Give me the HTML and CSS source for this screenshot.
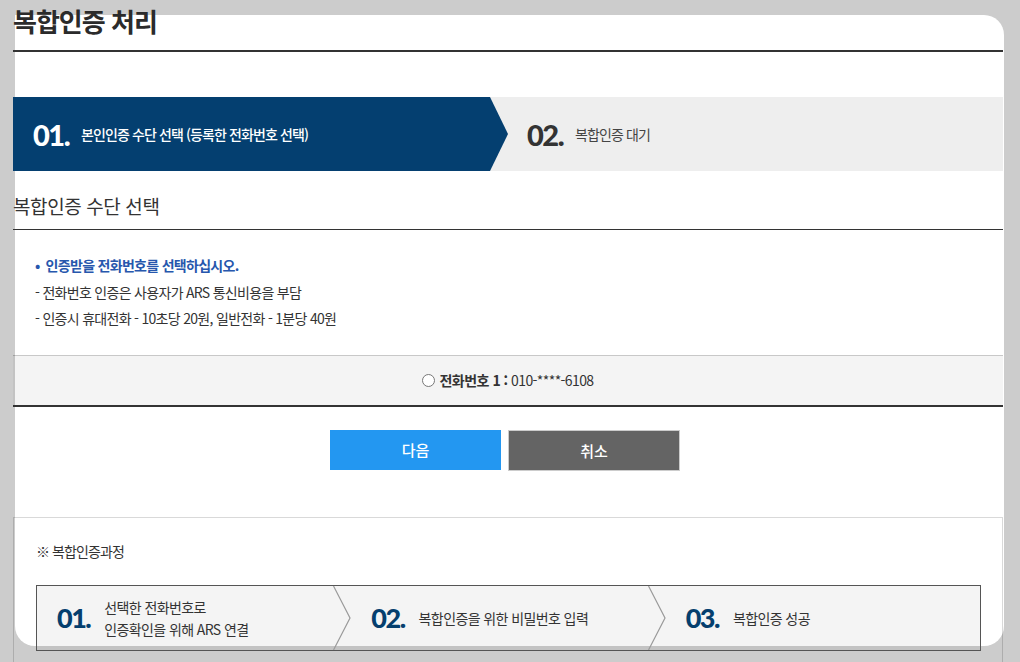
FILE: index.html
```html
<!DOCTYPE html>
<html lang="ko">
<head>
    <meta charset="UTF-8">
    <meta name="viewport" content="width=device-width, initial-scale=1.0">
    <title>복합인증 처리</title>
    <link rel="stylesheet" href="styles.css">
</head>
<body>
    <div class="panel">
        <div class="content">
            <h1 class="page-title">복합인증 처리</h1>

            <ol class="steps">
                <li class="step step-on"><span class="num">01.</span><span class="step-txt">본인인증 수단 선택 (등록한 전화번호 선택)</span></li>
                <li class="step"><span class="num">02.</span><span class="step-txt">복합인증 대기</span></li>
            </ol>

            <h2 class="sub-title">복합인증 수단 선택</h2>
            <ul class="notice">
                <li class="notice-main">인증받을 전화번호를 선택하십시오.</li>
                <li>- 전화번호 인증은 사용자가 ARS 통신비용을 부담</li>
                <li>- 인증시 휴대전화 - 10초당 20원, 일반전화 - 1분당 40원</li>
            </ul>

            <div class="phone-row">
                <label class="phone"><input type="radio" name="phone" class="radio"><b>전화번호 1 :</b> <span class="phone-no">010-****-6108</span></label>
            </div>

            <div class="btns">
                <button class="btn btn-next">다음</button>
                <button class="btn btn-cancel">취소</button>
            </div>

            <div class="process-box">
                <p class="process-label">※ 복합인증과정</p>
                <ol class="process">
                    <li>
                        <span class="num">01.</span>
                        <span class="process-txt">선택한 전화번호로<br>인증확인을 위해 ARS 연결</span>
                        <svg class="chev" width="18" height="64" viewBox="0 0 18 64"><polyline points="0.5,0 17,32 0.5,64" fill="none" stroke="#999" stroke-width="1.2"/></svg>
                    </li>
                    <li>
                        <span class="num">02.</span>
                        <span class="process-txt">복합인증을 위한 비밀번호 입력</span>
                        <svg class="chev" width="18" height="64" viewBox="0 0 18 64"><polyline points="0.5,0 17,32 0.5,64" fill="none" stroke="#999" stroke-width="1.2"/></svg>
                    </li>
                    <li>
                        <span class="num">03.</span>
                        <span class="process-txt">복합인증 성공</span>
                    </li>
                </ol>
            </div>
        </div>
    </div>
</body>
</html>
```

FILE: styles.css
```css
html, body {
    height: 662px;
    overflow: hidden;
}
body {
    margin: 0;
    padding: 15px 16px 0 15px;
    background: #ccc;
    font-family: "Noto Sans CJK KR", "Noto Sans", sans-serif;
    color: #333;
    font-size: 14px;
    box-sizing: border-box;
}
.panel {
    display: flow-root;
    height: 631px;
    background: #fff;
    border-radius: 0 20px 20px 20px;
}
.content {
    margin: -15px 1px 0 -2px;
}
.num {
    font-family: Lato, "Liberation Sans", sans-serif;
    font-weight: 900;
    letter-spacing: -1.5px;
}

/* title */
.page-title {
    margin: 0;
    height: 50px;
    line-height: 42px;
    font-size: 26px;
    font-weight: 700;
    letter-spacing: -1px;
    color: #2b2b2b;
    border-bottom: 2px solid #333;
}

/* top steps */
.steps {
    display: flex;
    margin: 45px 0 0;
    padding: 0;
    list-style: none;
    height: 74px;
    background: #eee;
}
.step {
    display: flex;
    align-items: center;
    padding-left: 19px;
}
.step .num {
    font-size: 29px;
    color: #333;
    margin-right: 12px;
}
.step-txt {
    letter-spacing: -0.9px;
    color: #444;
}
.step-on {
    width: 495px;
    box-sizing: border-box;
    padding-left: 20px;
    background: #043f70;
    clip-path: polygon(0 0, 477px 0, 100% 50%, 477px 100%, 0 100%);
}
.step-on .num,
.step-on .step-txt {
    color: #fff;
}
.step-on .step-txt {
    font-weight: 500;
}

/* select */
.sub-title {
    margin: 0;
    padding: 20px 0 8px;
    line-height: 30px;
    font-size: 19px;
    font-weight: 400;
    letter-spacing: -0.4px;
    border-bottom: 1px solid #333;
}
.notice {
    margin: 0 0 23px;
    padding: 22px 0 0 22px;
    list-style: none;
    line-height: 26.5px;
    letter-spacing: -0.7px;
}
.notice-main {
    color: #2757ad;
    font-weight: 700;
}
.notice-main::before {
    content: "•";
    margin-right: 6px;
}
.phone-row {
    height: 49px;
    line-height: 49px;
    text-align: center;
    border-top: 1px solid rgba(0, 0, 0, 0.18);
    border-bottom: 2px solid #333;
    background: rgba(0, 0, 0, 0.045);
}
.phone {
    letter-spacing: -0.5px;
}
.phone-no {
    letter-spacing: -0.6px;
}
.radio {
    display: inline-block;
    vertical-align: middle;
    width: 13px;
    height: 13px;
    margin: -2px 4px 0 0;
    appearance: none;
    border: 1px solid #777;
    border-radius: 50%;
    background: #fff;
}

/* buttons */
.btns {
    display: flex;
    justify-content: center;
    gap: 7px;
    margin-top: 23px;
    padding-right: 6px;
}
.btn {
    width: 171px;
    height: 40px;
    border: 0;
    font-family: inherit;
    font-size: 15px;
    font-weight: 500;
    color: #fff;
    cursor: pointer;
}
.btn-next {
    background: #2397f1;
}
.btn-cancel {
    width: 172px;
    height: 41px;
    background: #646464;
    border: 1px solid #ccc;
}

/* process */
.process-box {
    margin-top: 46px;
    padding: 23px 21px 0 22px;
    height: 200px;
    border: 1px solid rgba(0, 0, 0, 0.15);
}
.process-label {
    margin: 0 0 24px;
    line-height: 20px;
    font-size: 14px;
    letter-spacing: -0.9px;
}
.process {
    display: flex;
    margin: 0;
    padding: 0;
    list-style: none;
    height: 64px;
    border: 1px solid #555;
    background: rgba(0, 0, 0, 0.045);
}
.process li {
    flex: 1;
    display: flex;
    align-items: center;
    padding-left: 20px;
}
.process .num {
    font-size: 27px;
    color: #053f6e;
    margin-right: 14px;
}
.process-txt {
    font-size: 14px;
    line-height: 22px;
    letter-spacing: -0.6px;
}
.chev {
    margin-left: auto;
    flex-shrink: 0;
}
```
